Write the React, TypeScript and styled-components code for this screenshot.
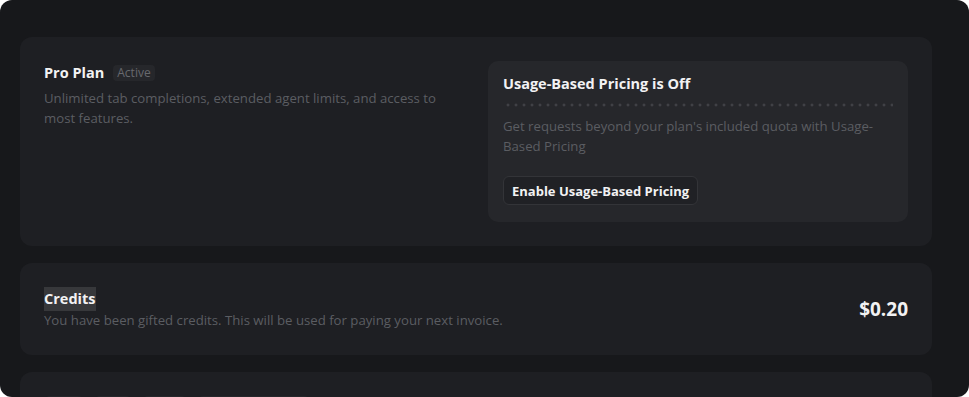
import React from "react";
import styled, { createGlobalStyle } from "styled-components";

const GlobalStyle = createGlobalStyle`
  html, body {
    margin: 0;
    padding: 0;
    background: #ffffff;
  }
  * {
    box-sizing: border-box;
  }
`;

const Shell = styled.div`
  height: 100vh;
  overflow: hidden;
  background: #17181b;
  border-radius: 12px;
  padding: 37px 37px 0 20px;
  display: flex;
  flex-direction: column;
  gap: 17px;
  font-family: "Open Sans", "Noto Sans", sans-serif;
  color: #ededee;
`;

const Card = styled.section`
  background: #1e1f23;
  border-radius: 12px;
  padding: 24px;
  flex-shrink: 0;
`;

const PlanGrid = styled.div`
  display: grid;
  grid-template-columns: 1fr 1fr;
  gap: 24px;
`;

const Column = styled.div`
  display: flex;
  flex-direction: column;
`;

const TitleRow = styled.div`
  display: flex;
  align-items: center;
  gap: 9px;
  height: 24px;
`;

const Title = styled.span<{ $marked?: boolean }>`
  font-size: 14.5px;
  font-weight: 700;
  color: #f2f2f3;
  line-height: 24px;
  align-self: flex-start;
  background: ${(p) => (p.$marked ? "#37383b" : "transparent")};
`;

const Badge = styled.span`
  font-size: 12px;
  line-height: 16px;
  padding: 0 4px;
  border-radius: 4px;
  background: #26272b;
  color: #68696e;
`;

const Muted = styled.p`
  margin: 0;
  font-size: 13.2px;
  line-height: 19.5px;
  color: #5b5d62;
`;

const UsageBox = styled.div`
  background: #26272b;
  border-radius: 10px;
  padding: 11px 15px 17px;
  display: flex;
  flex-direction: column;
`;

const Dots = styled.div`
  height: 4px;
  margin: 7px 0 10px 1px;
  background-image: radial-gradient(circle, #404146 1.3px, transparent 1.7px);
  background-size: 8px 4px;
  background-repeat: repeat-x;
`;

const OutlineButton = styled.button`
  align-self: flex-start;
  margin-top: 20px;
  height: 29px;
  padding: 0 8px;
  border: 1px solid #333438;
  border-radius: 6px;
  background: #202125;
  color: #f2f2f3;
  font-family: inherit;
  font-size: 13px;
  font-weight: 700;
`;

const CreditRow = styled.div`
  display: flex;
  align-items: center;
  justify-content: space-between;
`;

const Amount = styled.span`
  font-size: 19px;
  font-weight: 700;
  color: #f2f2f3;
`;

const Tabs = styled.div`
  display: flex;
  gap: 10px;
`;

const Tab = styled.span<{ $w: number }>`
  width: ${(p) => p.$w}px;
  height: 28px;
  border-radius: 6px;
  background: #26272b;
`;

const tabWidths = [40, 38, 45, 113];

export default function App() {
  return (
    <>
      <GlobalStyle />
      <Shell>
        <Card>
          <PlanGrid>
            <Column>
              <TitleRow>
                <Title>Pro Plan</Title>
                <Badge>Active</Badge>
              </TitleRow>
              <Muted style={{ marginTop: 4 }}>
                Unlimited tab completions, extended agent limits, and access to
                most features.
              </Muted>
            </Column>
            <UsageBox>
              <Title>Usage-Based Pricing is Off</Title>
              <Dots />
              <Muted>
                Get requests beyond your plan's included quota with Usage-Based
                Pricing
              </Muted>
              <OutlineButton>Enable Usage-Based Pricing</OutlineButton>
            </UsageBox>
          </PlanGrid>
        </Card>
        <Card>
          <CreditRow>
            <Column>
              <Title $marked>Credits</Title>
              <Muted>
                You have been gifted credits. This will be used for paying your
                next invoice.
              </Muted>
            </Column>
            <Amount>$0.20</Amount>
          </CreditRow>
        </Card>
        <Card>
          <Tabs>
            {tabWidths.map((w, i) => (
              <Tab key={i} $w={w} />
            ))}
          </Tabs>
        </Card>
      </Shell>
    </>
  );
}
